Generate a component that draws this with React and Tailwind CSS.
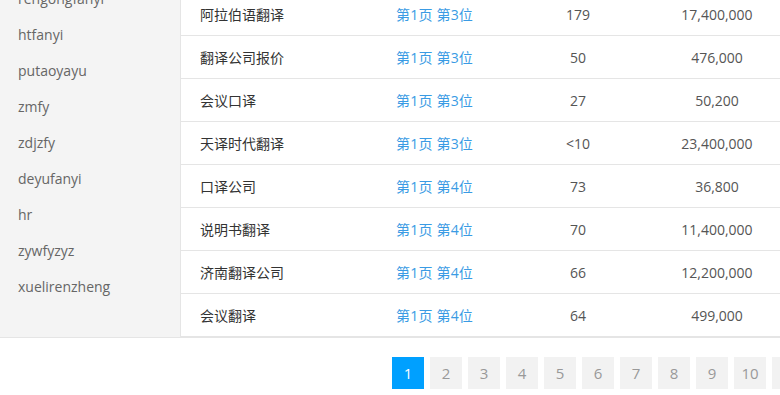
import React from 'react';

const sideItems = [
  'rengongfanyi',
  'htfanyi',
  'putaoyayu',
  'zmfy',
  'zdjzfy',
  'deyufanyi',
  'hr',
  'zywfyzyz',
  'xuelirenzheng',
];

const rows = [
  { kw: '阿拉伯语翻译', rank: '第1页 第3位', idx: '179', total: '17,400,000' },
  { kw: '翻译公司报价', rank: '第1页 第3位', idx: '50', total: '476,000' },
  { kw: '会议口译', rank: '第1页 第3位', idx: '27', total: '50,200' },
  { kw: '天译时代翻译', rank: '第1页 第3位', idx: '<10', total: '23,400,000' },
  { kw: '口译公司', rank: '第1页 第4位', idx: '73', total: '36,800' },
  { kw: '说明书翻译', rank: '第1页 第4位', idx: '70', total: '11,400,000' },
  { kw: '济南翻译公司', rank: '第1页 第4位', idx: '66', total: '12,200,000' },
  { kw: '会议翻译', rank: '第1页 第4位', idx: '64', total: '499,000' },
];

const pages = ['1', '2', '3', '4', '5', '6', '7', '8', '9', '10', '11'];

export default function App() {
  return (
    <div
      className="w-[780px] h-[395px] overflow-hidden bg-white text-[14px]"
      style={{ fontFamily: '"Open Sans", "Noto Sans CJK SC", sans-serif' }}
    >
      <div className="-mt-[20px] flex border-b border-[#e5e5e5]">
        {/* 左侧拼音列表 */}
        <div className="w-[181px] shrink-0 bg-[#f4f4f4] border-r border-[#e5e5e5]">
          {sideItems.map((s) => (
            <div key={s} className="h-[36px] flex items-center pl-[18px] text-[#666]">
              {s}
            </div>
          ))}
        </div>

        {/* 关键词排名表 */}
        <div className="flex-1 pt-[13px]">
          {rows.map((r) => (
            <div key={r.kw} className="h-[43px] flex items-center border-b border-[#e5e5e5]">
              <div className="w-[215px] pl-[19px] text-[#333]">{r.kw}</div>
              <div className="w-[101px] text-[#3a9be4] tracking-[0.2px]">{r.rank}</div>
              <div className="w-[162px] text-center text-[#555]">{r.idx}</div>
              <div className="w-[116px] text-center text-[#555]">{r.total}</div>
            </div>
          ))}
        </div>
      </div>

      {/* 分页 */}
      <div className="flex gap-[6px] pl-[392px] pt-[19px]">
        {pages.map((p) => (
          <div
            key={p}
            className={`w-[32px] h-[32px] shrink-0 flex items-center justify-center text-[15px] ${
              p === '1' ? 'bg-[#00a0ff] text-white' : 'bg-[#f2f2f2] text-[#999]'
            }`}
          >
            {p}
          </div>
        ))}
      </div>
    </div>
  );
}
